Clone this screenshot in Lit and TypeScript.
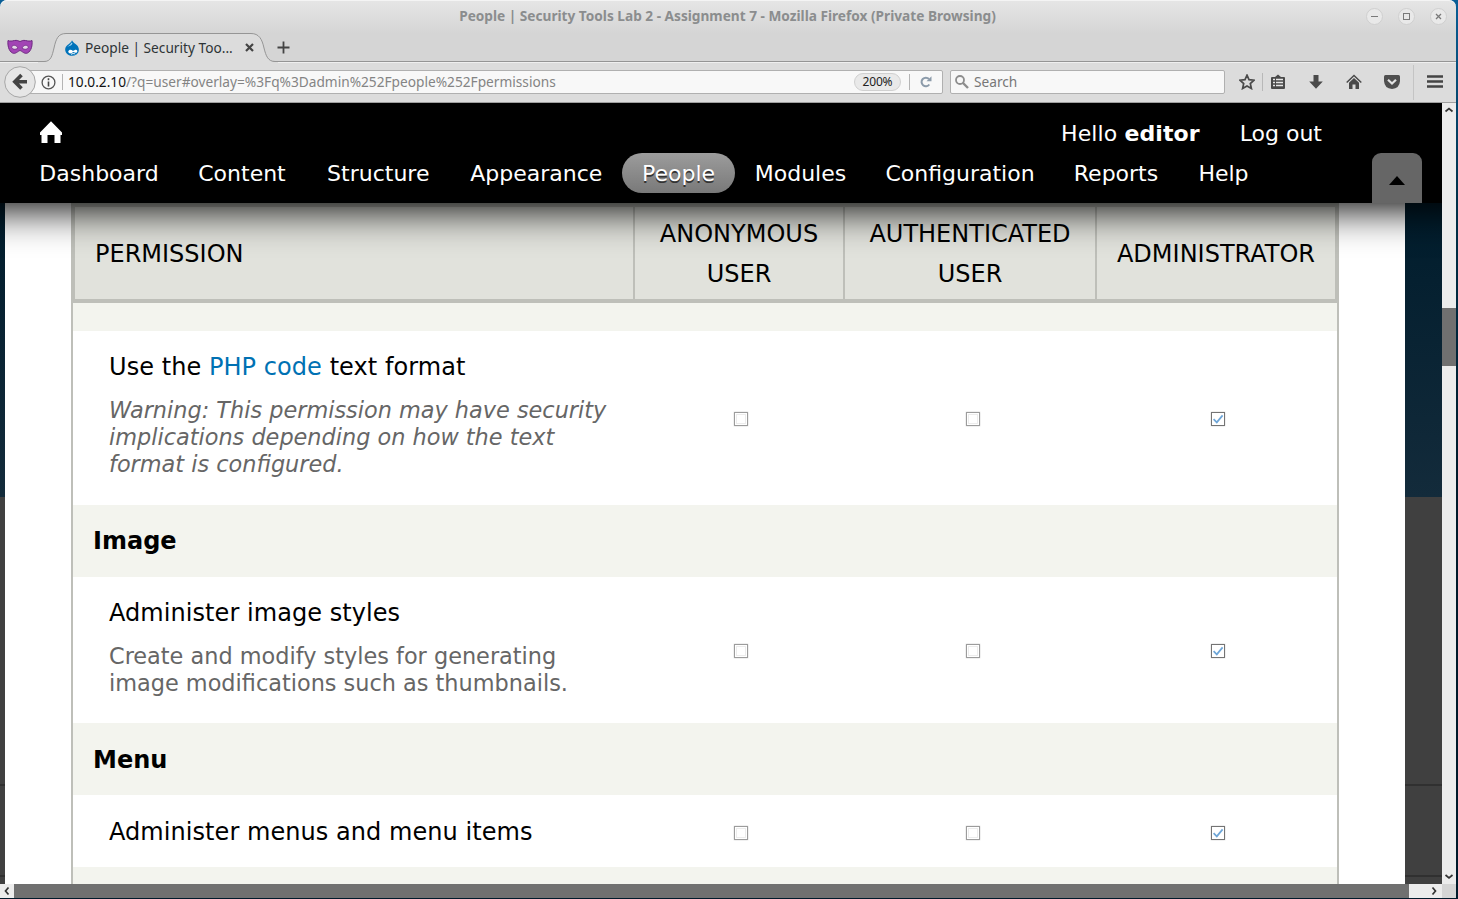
import { LitElement, html, css, svg, nothing } from "lit";
import { customElement, property } from "lit/decorators.js";

type Perm = { kind: "perm"; title: unknown; desc?: string[]; warn?: boolean; h: number; low?: boolean };
type Group = { kind: "group"; title: string; h: number; low?: boolean };

const rows: (Perm | Group)[] = [
  { kind: "group", title: "", h: 28 },
  {
    kind: "perm",
    title: html`Use the <a>PHP code</a> text format`,
    desc: ["Warning: This permission may have security", "implications depending on how the text", "format is configured."],
    warn: true,
    h: 174,
  },
  { kind: "group", title: "Image", h: 72 },
  {
    kind: "perm",
    title: "Administer image styles",
    desc: ["Create and modify styles for generating", "image modifications such as thumbnails."],
    h: 146,
  },
  { kind: "group", title: "Menu", h: 72, low: true },
  { kind: "perm", title: "Administer menus and menu items", h: 72, low: true },
  { kind: "group", title: "", h: 72 },
];

@customElement("check-box")
class CheckBox extends LitElement {
  @property({ type: Boolean }) checked = false;
  static styles = css`
    :host { display: block; width: 16px; height: 16px; }
    svg { display: block; }
  `;
  render() {
    return html`<svg width="16" height="16" viewBox="0 0 16 16">
      <rect x="0.5" y="0.5" width="15" height="15" rx="1" fill="none" stroke="#f0f0f0" />
      <rect x="1.5" y="1.5" width="13" height="13" fill="#fff" stroke=${this.checked ? "#747474" : "#9c9c9c"} />
      ${this.checked
        ? svg`<path d="M3.6 8.2L6.8 11.4L12.6 4.4" fill="none" stroke="#6ea6d8" stroke-width="1.7"/>`
        : svg`<rect x="3.5" y="3.5" width="9" height="9" fill="none" stroke="#ececec"/>`}
    </svg>`;
  }
}

@customElement("browser-chrome")
class BrowserChrome extends LitElement {
  static styles = css`
    :host { display: block; height: 103px; font-family: "Noto Sans", "Open Sans", sans-serif; color: #2e3436; }
    svg { display: block; flex: none; }
    .frame { height: 103px; box-sizing: border-box; background: linear-gradient(#e6e6e6, #d5d5d5 34px, #d5d5d5); border-radius: 7px 7px 0 0; box-shadow: inset 0 1px #f4f4f4; }
    .title { height: 33px; display: grid; grid-template-columns: 1fr 96px; align-items: center; box-sizing: border-box; padding-bottom: 1px; }
    .name { grid-column: 1 / 3; grid-row: 1; text-align: center; font-size: 13.67px; font-weight: 700; color: #8b8d8e; line-height: 20px; white-space: nowrap; padding: 0 1px 1px 0; }
    .buttons { grid-column: 2; grid-row: 1; display: flex; gap: 15px; padding-left: 6px; }
    .tabs { height: 29px; display: flex; box-sizing: border-box; border-bottom: 1px solid #959595; }
    .mask { padding: 6px 0 0 7px; width: 38px; box-sizing: border-box; }
    .tab { position: relative; width: 229px; height: 29px; display: flex; align-items: center; box-sizing: border-box; padding-left: 18px; font-size: 13.7px; }
    .shape { position: absolute; left: 0; top: 0; }
    .tab > :not(.shape) { position: relative; }
    .fav { margin-left: 8px; }
    .label { width: 156px; margin-left: 5px; white-space: nowrap; line-height: 20px; }
    .close { margin-left: 4px; }
    .path, .hint { display: inline-block; }
    .plus { padding: 8px 0 0 10px; }
    .bar { height: 41px; box-sizing: border-box; background: #dcdcdc; border-top: 1px solid #efefef; border-bottom: 1px solid #a0a0a0; display: flex; align-items: center; padding: 0 0 1px 4px; }
    .back { z-index: 1; }
    .url, .search { height: 24px; box-sizing: border-box; border: 1px solid #b0b0b0; border-radius: 2px; background: #f8f8f8; display: flex; align-items: center; font-size: 13.7px; }
    .url { width: 917px; margin-left: -10px; padding-left: 14px; }
    .sep { width: 1px; height: 16px; background: #b4b4b4; margin: 0 5px 0 6px; }
    .sep2 { margin: 0 10px 0 8px; }
    .path { width: 786px; white-space: nowrap; color: #848484; line-height: 22px; }
    .host { color: #111; }
    .zoom { width: 47px; height: 18px; box-sizing: border-box; border: 1px solid #d0d0d0; border-radius: 9px; background: #e9e9e9; color: #222; font-size: 12px; line-height: 16px; text-align: center; letter-spacing: -0.2px; }
    .search { width: 275px; margin-left: 7px; padding-left: 4px; color: #777; }
    .hint { margin-left: 5px; line-height: 22px; }
    .icons { display: flex; align-items: center; padding-left: 14px; height: 38px; }
    .gap { margin-left: 23px; }
    .gap2 { margin-left: 22px; }
    .vs { width: 1px; height: 18px; background: #b8b8b8; margin: 0 7px; }
    .vl { width: 1px; height: 35px; background: #c4c4c4; margin: 0 13px; }
  `;
  render() {
    const wb = (p: unknown) => svg`<circle cx="8.5" cy="8.5" r="8" fill="#e9e9e9" stroke="#cfcfcf"/>${p}`;
    return html`<div class="frame">
      <div class="title">
        <div class="name">People | Security Tools Lab 2 - Assignment 7 - Mozilla Firefox (Private Browsing)</div>
        <div class="buttons">
          <svg width="17" height="17">${wb(svg`<path d="M5 8.5h7" stroke="#7a7a7a"/>`)}</svg>
          <svg width="17" height="17">${wb(svg`<rect x="5.5" y="5.5" width="6" height="6" fill="none" stroke="#7a7a7a"/>`)}</svg>
          <svg width="17" height="17">${wb(svg`<path d="M6 6l5 5M11 6l-5 5" stroke="#7a7a7a" stroke-width="1.3"/>`)}</svg>
        </div>
      </div>
      <div class="tabs">
        <div class="mask">
          <svg width="26" height="16" viewBox="0 0 26 16">
            <path d="M1 1.5C3 2.5 5 2 7.500 1.500C10 1 11.500 2 13 2.500C14.500 2 16 1 18.500 1.500C21 2 23 2.500 25 1.500C25.500 6 24.500 12 20.500 14C17.500 15.500 15 12 13 11.500C11 12 8.500 15.500 5.500 14C1.500 12 .500 6 1 1.500Z" fill="#a244b5" stroke="#6d2880"/>
            <path d="M4.500 8C6 5.300 9.500 6 11 9C8.500 11 5.500 10.600 4.500 8ZM21.500 8C20 5.300 16.500 6 15 9C17.500 11 20.500 10.600 21.500 8Z" fill="#e5d8e8" stroke="#6d2880" stroke-width=".8"/>
          </svg>
        </div>
        <div class="tab">
          <svg class="shape" width="240" height="30" viewBox="0 0 240 30">
            <path d="M0 28.500H6C13 28.500 14 23 16 15C18 6 20 .5 28 .5H213C221 .5 224 6 226 15C228 23 230 28.500 237 28.500H240V30H0Z" fill="#dcdcdc"/>
            <path d="M0 28.500H6C13 28.500 14 23 16 15C18 6 20 .5 28 .5H213C221 .5 224 6 226 15C228 23 230 28.500 237 28.500H240" fill="none" stroke="#959595"/>
          </svg>
          <svg class="fav" width="16" height="16" viewBox="0 0 16 16">
            <path d="M8 .3C9 2.800 11 3.500 13 5.300C16 8.500 15 12.500 12.500 14.500C9.500 16.500 5 16.200 2.700 13.500C.2 10.500 1 7 3.500 5C5.500 3.500 7.300 2.500 8 .3Z" fill="#0073ba"/>
            <path d="M7.500 2.500C7 4.500 4.500 5.500 3.300 7C5 6 8 5.500 8.500 3.500Z" fill="#9ad0f0"/>
            <path d="M4.200 11.500C5.200 9 7.500 9.700 9 11C10.500 10 12.500 9 13.300 10.700C13.600 13 11.500 13.300 9.200 12C7.200 14 4.700 14 4.200 11.500Z" fill="#fff"/>
            <path d="M7 14.300C8.500 13.400 10 13.400 11.200 14" stroke="#fff" fill="none"/>
          </svg>
          <div class="label">People | Security Too...</div>
          <svg class="close" width="9" height="9" viewBox="0 0 9 9"><path d="M1 1l7 7M8 1l-7 7" stroke="#444" stroke-width="2.200"/></svg>
        </div>
        <div class="plus"><svg width="13" height="13"><path d="M6.500 .5v12M.5 6.500h12" stroke="#444" stroke-width="1.800"/></svg></div>
      </div>
      <div class="bar">
        <svg class="back" width="32" height="32" viewBox="0 0 32 32">
          <circle cx="16" cy="16" r="15.300" fill="#e6e6e6" stroke="#a6a6a6"/>
          <path d="M17.500 9L10.800 15.800L17.500 22.500M11 15.800H23" fill="none" stroke="#444" stroke-width="3.600"/>
        </svg>
        <div class="url">
          <svg width="15" height="15"><circle cx="7.500" cy="7.500" r="6.400" fill="none" stroke="#555" stroke-width="1.300"/><path d="M7.500 3.300v1.900M7.500 6.500v5" stroke="#444" stroke-width="1.600"/></svg>
          <div class="sep"></div>
          <div class="path"><span class="host">10.0.2.10</span><span>/?q=user#overlay=%3Fq%3Dadmin%252Fpeople%252Fpermissions</span></div>
          <div class="zoom">200%</div>
          <div class="sep sep2"></div>
          <svg width="12" height="12" viewBox="0 0 12 12"><path d="M9.300 8.500A4.300 4.300 0 1 1 9 3" fill="none" stroke="#8c9baa" stroke-width="2"/><path d="M6.500 5.200H11.500V.3Z" fill="#8c9baa"/></svg>
        </div>
        <div class="search">
          <svg width="14" height="14"><circle cx="5" cy="5" r="4" fill="none" stroke="#8e8e8e" stroke-width="1.800"/><path d="M8 8l5 5" stroke="#8e8e8e" stroke-width="2.400"/></svg>
          <span class="hint">Search</span>
        </div>
        <div class="icons">
          <svg width="16" height="16" viewBox="0 0 16 16"><path d="M8 1.200L10 5.700L15 6.200L11.300 9.500L12.400 14.500L8 12L3.600 14.500L4.700 9.500L1 6.200L6 5.700Z" fill="none" stroke="#4a4a4a" stroke-width="1.700"/></svg>
          <div class="vs"></div>
          <svg width="16" height="16" viewBox="0 0 16 16"><path d="M2 3H5L8 .5L11 3H14Q15 3 15 4V14Q15 15 14 15H2Q1 15 1 14V4Q1 3 2 3Z" fill="#4a4a4a"/><path d="M3 5.500h2M6 5.500h7M3 8.500h2M6 8.500h7M3 11.500h2M6 11.500h7" stroke="#e6e6e6" stroke-width="1.700"/></svg>
          <svg class="gap" width="14" height="16" viewBox="0 0 14 16"><path d="M4.500 1H9.500V7.500H13.800L7 14.700L.2 7.500H4.500Z" fill="#4a4a4a"/></svg>
          <svg class="gap" width="16" height="16" viewBox="0 0 16 16"><path d="M.7 8.500L8 1.500L15.300 8.500" fill="none" stroke="#4a4a4a" stroke-width="1.500"/><path d="M8 4L13 8.800V15H9.500V10.500H6.500V15H3V8.800Z" fill="#4a4a4a"/></svg>
          <svg class="gap2" width="16" height="16" viewBox="0 0 16 16"><path d="M1.500 1H14.500Q16 1 16 2.500V7Q15.500 14.500 8 15Q.5 14.500 0 7V2.500Q0 1 1.500 1Z" fill="#4f4f4f"/><path d="M4 5.800L8 9.500L12 5.800" fill="none" stroke="#e4e4e4" stroke-width="2.200"/></svg>
          <div class="vl"></div>
          <svg width="16" height="14"><path d="M0 1.500h16M0 6.500h16M0 11.500h16" stroke="#444" stroke-width="2.600"/></svg>
        </div>
      </div>
    </div>`;
  }
}

const menu: [string, number][] = [
  ["Dashboard", 158],
  ["Content", 128],
  ["Structure", 144.5],
  ["Appearance", 171.5],
  ["People", 113],
  ["Modules", 131],
  ["Configuration", 188],
  ["Reports", 124],
  ["Help", 91],
];

@customElement("admin-toolbar")
class AdminToolbar extends LitElement {
  static styles = css`
    :host { display: block; height: 100px; background: #000; color: #fff; font: 22px/40px "DejaVu Sans", sans-serif; box-shadow: 0 6px 40px #000; position: relative; z-index: 2; margin: 0 -40px; padding: 0 40px; }
    .top { height: 50px; display: flex; box-sizing: border-box; padding: 11px 120px 0 40px; justify-content: space-between; }
    .home { padding-top: 7px; }
    .user { display: flex; gap: 40px; }
    .hello { letter-spacing: 0.1px; }
    .menu { display: flex; height: 50px; padding-left: 20px; }
    .item { height: 40px; box-sizing: border-box; padding: 1px 0 0; border-radius: 20px; white-space: nowrap; text-align: center; }
    .active { background: linear-gradient(#9c9c9c, #797979); text-shadow: 0 2px #333; }
    .toggle { width: 50px; height: 50px; margin: 0 20px 0 auto; background: #666; border-radius: 9px 9px 0 0; }
    svg { display: block; }
  `;
  render() {
    return html`<div class="top">
        <div class="home"><svg width="22" height="22"><path d="M11 .3L22 11.500V14H20.500V22H14.500V14H7.500V22H1.500V14H0V11.500Z" fill="#fff"/></svg></div>
        <div class="user"><span class="hello">Hello <b>editor</b></span><span>Log out</span></div>
      </div>
      <div class="menu">
        ${menu.map(([t, w]) => html`<div class="item ${t === "People" ? "active" : ""}" style="width:${w}px">${t}</div>`)}
        <div class="toggle"><svg width="50" height="50"><path d="M17 32L25 23L33 32Z" fill="#000"/></svg></div>
      </div>`;
  }
}

@customElement("permission-table")
class PermissionTable extends LitElement {
  static styles = css`
    :host { display: block; width: 1268px; font: 24px/40px "DejaVu Sans", sans-serif; color: #000; }
    .head { height: 100px; box-sizing: border-box; display: grid; grid-template-columns: 558px 208px 250px 238px; gap: 2px; background: #bebfb9; padding: 4px; }
    .th { background: #e1e2dc; display: flex; align-items: center; justify-content: center; text-align: center; padding-top: 2px; }
    .th:first-child { justify-content: flex-start; padding-left: 20px; }
    .body { border: solid #bebfb9; border-width: 0 2px; }
    .group { background: #f3f4ee; font-weight: 700; padding: 16px 20px 0; box-sizing: border-box; overflow: hidden; }
    .perm { display: grid; grid-template-columns: 561px 214px 250px 239px; align-items: center; justify-items: center; background: #fff; }
    .text { justify-self: start; align-self: start; padding: 16px 0 0 36px; white-space: nowrap; letter-spacing: 0.06px; }
    .group.low { padding-top: 17px; }
    .low .text { padding-top: 17px; }
    check-box { margin-top: 2px; }
    .low check-box { margin-top: 4px; }
    a { color: #0071b3; }
    .desc { margin-top: 10px; font-size: 22.4px; line-height: 27px; color: #666; letter-spacing: 0; }
    .warn { font-style: italic; }
  `;
  render() {
    return html`<div class="head">
        <div class="th">PERMISSION</div>
        <div class="th">ANONYMOUS<br />USER</div>
        <div class="th">AUTHENTICATED<br />USER</div>
        <div class="th">ADMINISTRATOR</div>
      </div>
      <div class="body">
        ${rows.map((r) =>
          r.kind === "group"
            ? html`<div class="group ${r.low ? "low" : ""}" style="height:${r.h}px">${r.title}</div>`
            : html`<div class="perm ${r.low ? "low" : ""}" style="height:${r.h}px">
                <div class="text">
                  <div>${r.title}</div>
                  ${r.desc ? html`<div class="desc ${r.warn ? "warn" : ""}">${r.desc.map((l) => html`<div>${l}</div>`)}</div>` : nothing}
                </div>
                <check-box></check-box><check-box></check-box><check-box checked></check-box>
              </div>`
        )}
      </div>`;
  }
}

@customElement("app-root")
class AppRoot extends LitElement {
  static styles = css`
    :host { display: block; width: 1458px; height: 899px; overflow: hidden; background: linear-gradient(#0a5f97, #003049 200px, #001a2b 480px, #001a2b); }
    .window { width: 1456px; height: 898px; display: flex; flex-direction: column; }
    .main { display: grid; grid-template-columns: 1442px 14px; height: 781px; }
    .page { overflow: hidden; background: linear-gradient(#001c2c 100px, #132b3b 394px, #404040 394px, #404040 681px, #303030 681px, #303030 683px, #404040 683px, #404040 772px, #303030 772px, #303030 774px, #404040 774px); }
    .sheet { width: 1400px; height: 681px; margin-left: 5px; background: #fff; overflow: hidden; display: flex; justify-content: center; box-sizing: border-box; }
    .vbar { background: #ececec; display: flex; flex-direction: column; }
    .vthumb { height: 58px; margin: 191px 0 auto; background: #707070; }
    .hbar { height: 14px; background: #ececec; display: grid; grid-template-columns: 14px 1395px 33px 14px; }
    .hthumb { background: #707070; }
    .right { justify-self: end; margin-right: 1px; }
    .corner { background: #d5d5d5; }
    svg { display: block; }
    path { fill: none; stroke: #333; stroke-width: 1.7; }
  `;
  render() {
    return html`<div class="window">
      <browser-chrome></browser-chrome>
      <div class="main">
        <div class="page">
          <admin-toolbar></admin-toolbar>
          <div class="sheet"><permission-table></permission-table></div>
        </div>
        <div class="vbar">
          <svg width="14" height="14"><path d="M3.500 8.500L7 5.500L10.500 8.500" /></svg>
          <div class="vthumb"></div>
          <svg width="14" height="14"><path d="M3.500 5L7 8L10.500 5" /></svg>
        </div>
      </div>
      <div class="hbar">
        <svg width="14" height="14"><path d="M8.500 3.500L5.500 7L8.500 10.500" /></svg>
        <div class="hthumb"></div>
        <svg class="right" width="14" height="14"><path d="M5.500 3.500L8.500 7L5.500 10.500" /></svg>
        <div class="corner"></div>
      </div>
    </div>`;
  }
}
